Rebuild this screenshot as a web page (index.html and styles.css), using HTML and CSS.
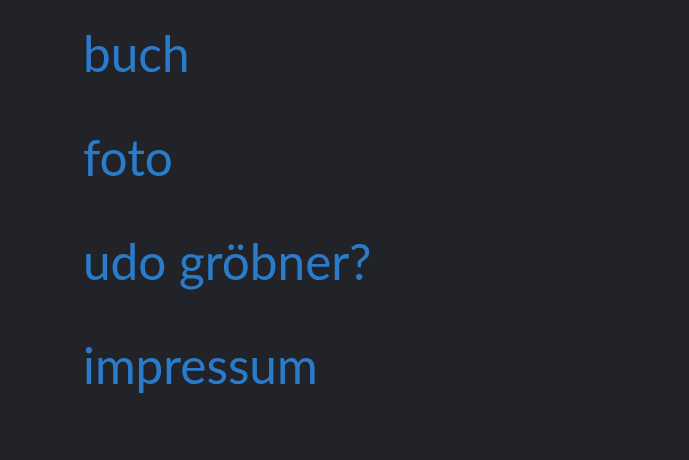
FILE: index.html
```html
<!DOCTYPE html>
<html lang="de"><head><meta charset="utf-8"><link rel="stylesheet" href="styles.css"></head>
<body>
<nav class="menu">
  <a class="menu-link" href="#">buch</a>
  <a class="menu-link" href="#">foto</a>
  <a class="menu-link" href="#">udo gröbner?</a>
  <a class="menu-link" href="#">impressum</a>
</nav>
</body></html>
```
FILE: styles.css
```css
html,body{margin:0;height:100%;background:#212328}
.menu{display:flex;flex-direction:column;align-items:flex-start;gap:44px;padding:23px 0 0 83px}
.menu-link{font-family:Lato,sans-serif;font-size:49.5px;line-height:60px;color:#2a7bc9;text-decoration:none;font-weight:400}
```
